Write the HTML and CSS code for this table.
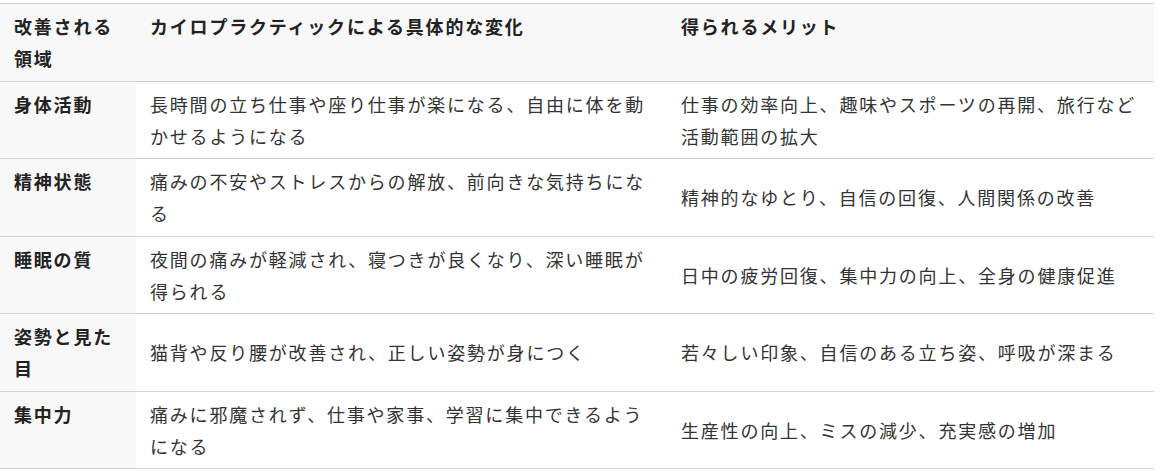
FILE: index.html
```html
<!DOCTYPE html>
<html lang="ja">
<head>
<meta charset="utf-8">
<link rel="stylesheet" href="styles.css">
</head>
<body>
<table class="benefits">
  <colgroup>
    <col class="c-area">
    <col class="c-change">
    <col class="c-merit">
  </colgroup>
  <thead>
    <tr>
      <th>改善される領域</th>
      <th>カイロプラクティックによる具体的な変化</th>
      <th>得られるメリット</th>
    </tr>
  </thead>
  <tbody>
    <tr>
      <th>身体活動</th>
      <td>長時間の立ち仕事や座り仕事が楽になる、自由に体を動かせるようになる</td>
      <td>仕事の効率向上、趣味やスポーツの再開、旅行など活動範囲の拡大</td>
    </tr>
    <tr>
      <th>精神状態</th>
      <td>痛みの不安やストレスからの解放、前向きな気持ちになる</td>
      <td>精神的なゆとり、自信の回復、人間関係の改善</td>
    </tr>
    <tr>
      <th>睡眠の質</th>
      <td>夜間の痛みが軽減され、寝つきが良くなり、深い睡眠が得られる</td>
      <td>日中の疲労回復、集中力の向上、全身の健康促進</td>
    </tr>
    <tr>
      <th>姿勢と見た目</th>
      <td>猫背や反り腰が改善され、正しい姿勢が身につく</td>
      <td>若々しい印象、自信のある立ち姿、呼吸が深まる</td>
    </tr>
    <tr>
      <th>集中力</th>
      <td>痛みに邪魔されず、仕事や家事、学習に集中できるようになる</td>
      <td>生産性の向上、ミスの減少、充実感の増加</td>
    </tr>
  </tbody>
</table>
</body>
</html>
```
FILE: styles.css
```css
html, body {
  margin: 0;
  padding: 0;
  background: #fff;
}
body {
  font-family: "Noto Sans CJK JP", "Noto Sans", sans-serif;
  font-size: 18px;
  color: #333;
}
.benefits {
  margin-top: 3px;
  width: 1154px;
  border-collapse: collapse;
  table-layout: fixed;
  letter-spacing: 0.1em;
}
.c-area { width: 136px; }
.c-change { width: 531px; }
.c-merit { width: 487px; }
.benefits th,
.benefits td {
  padding: 6px 14px;
  line-height: 32.25px;
  text-align: left;
  border-top: 1px solid #d2d2d2;
  border-bottom: 1px solid #d2d2d2;
}
.benefits thead th {
  background: #f8f8f8;
  font-weight: 700;
  color: #222;
  vertical-align: top;
}
.benefits tbody th {
  background: #f8f8f8;
  font-weight: 700;
  color: #222;
  vertical-align: top;
}
.benefits tbody td {
  vertical-align: middle;
  font-weight: 400;
}
```
